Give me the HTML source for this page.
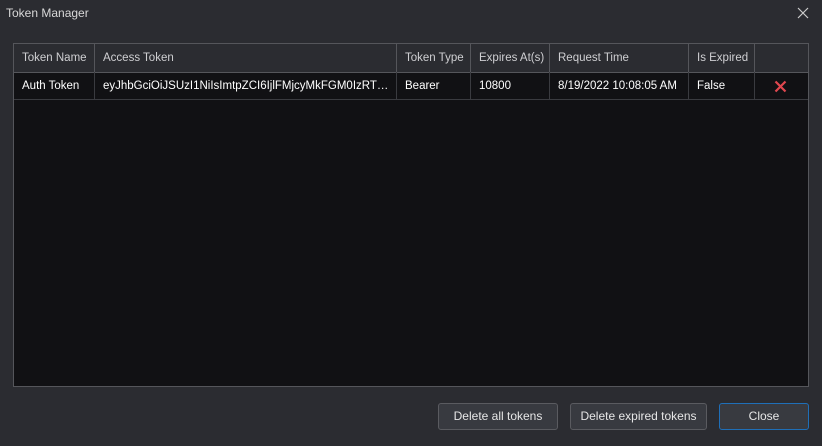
<!DOCTYPE html><html><head><style>
body{margin:0;width:822px;height:446px;background:#2b2c31;font-family:"Liberation Sans",sans-serif;font-size:11.5px;color:#fff;position:relative;overflow:hidden}
.t{position:absolute;left:6px;top:6px;color:#d8d8d8;font-size:12px}
.x{position:absolute;left:796px;top:6px}
.tbl{position:absolute;left:13px;top:43px;width:794px;height:342px;border:1px solid #55565b;background:#111114}
.h,.r{position:absolute;left:0;width:794px;height:28px}
.h{top:0;background:#2b2c31;border-bottom:1px solid #55565b;color:#cfcfd2}
.r{top:28px;border-bottom:1px solid #3a3b40;height:27px}
.c{position:absolute;top:0;height:100%;line-height:28px;padding-left:8px;padding-right:4px;border-right:1px solid #55565b;box-sizing:border-box;white-space:nowrap;overflow:hidden;text-overflow:ellipsis}
.r .c{border-right-color:#3a3b40;line-height:28px}
.b{position:absolute;top:403px;height:27px;border:1px solid #5a5b60;border-radius:3px;background:#383a40;color:#e6e6e6;box-sizing:border-box;text-align:center;line-height:25px;font-size:12px}
</style></head><body>
<div class="t">Token Manager</div>
<svg class="x" width="14" height="14"><path d="M2 2L12 12M12 2L2 12" stroke="#ccc" stroke-width="1.2"/></svg>
<div class="tbl">
<div class="h">
<div class="c" style="left:0;width:81px">Token Name</div>
<div class="c" style="left:81px;width:302px">Access Token</div>
<div class="c" style="left:383px;width:74px">Token Type</div>
<div class="c" style="left:457px;width:79px">Expires At(s)</div>
<div class="c" style="left:536px;width:139px">Request Time</div>
<div class="c" style="left:675px;width:66px">Is Expired</div>
</div>
<div class="r">
<div class="c" style="left:0;width:81px">Auth Token</div>
<div class="c" style="left:81px;width:302px">eyJhbGciOiJSUzI1NiIsImtpZCI6IjlFMjcyMkFGM0IzRTF...</div>
<div class="c" style="left:383px;width:74px">Bearer</div>
<div class="c" style="left:457px;width:79px">10800</div>
<div class="c" style="left:536px;width:139px">8/19/2022 10:08:05 AM</div>
<div class="c" style="left:675px;width:66px">False</div>
<svg style="position:absolute;left:760px;top:8px" width="13" height="13"><path d="M1.5 1.5L11.5 11.5M11.5 1.5L1.5 11.5" stroke="#e0474f" stroke-width="2.2"/></svg>
</div>
</div>
<div class="b" style="left:438px;width:120px">Delete all tokens</div>
<div class="b" style="left:570px;width:137px">Delete expired tokens</div>
<div class="b" style="left:719px;width:90px;border-color:#1f6fb8">Close</div>
</body></html>
